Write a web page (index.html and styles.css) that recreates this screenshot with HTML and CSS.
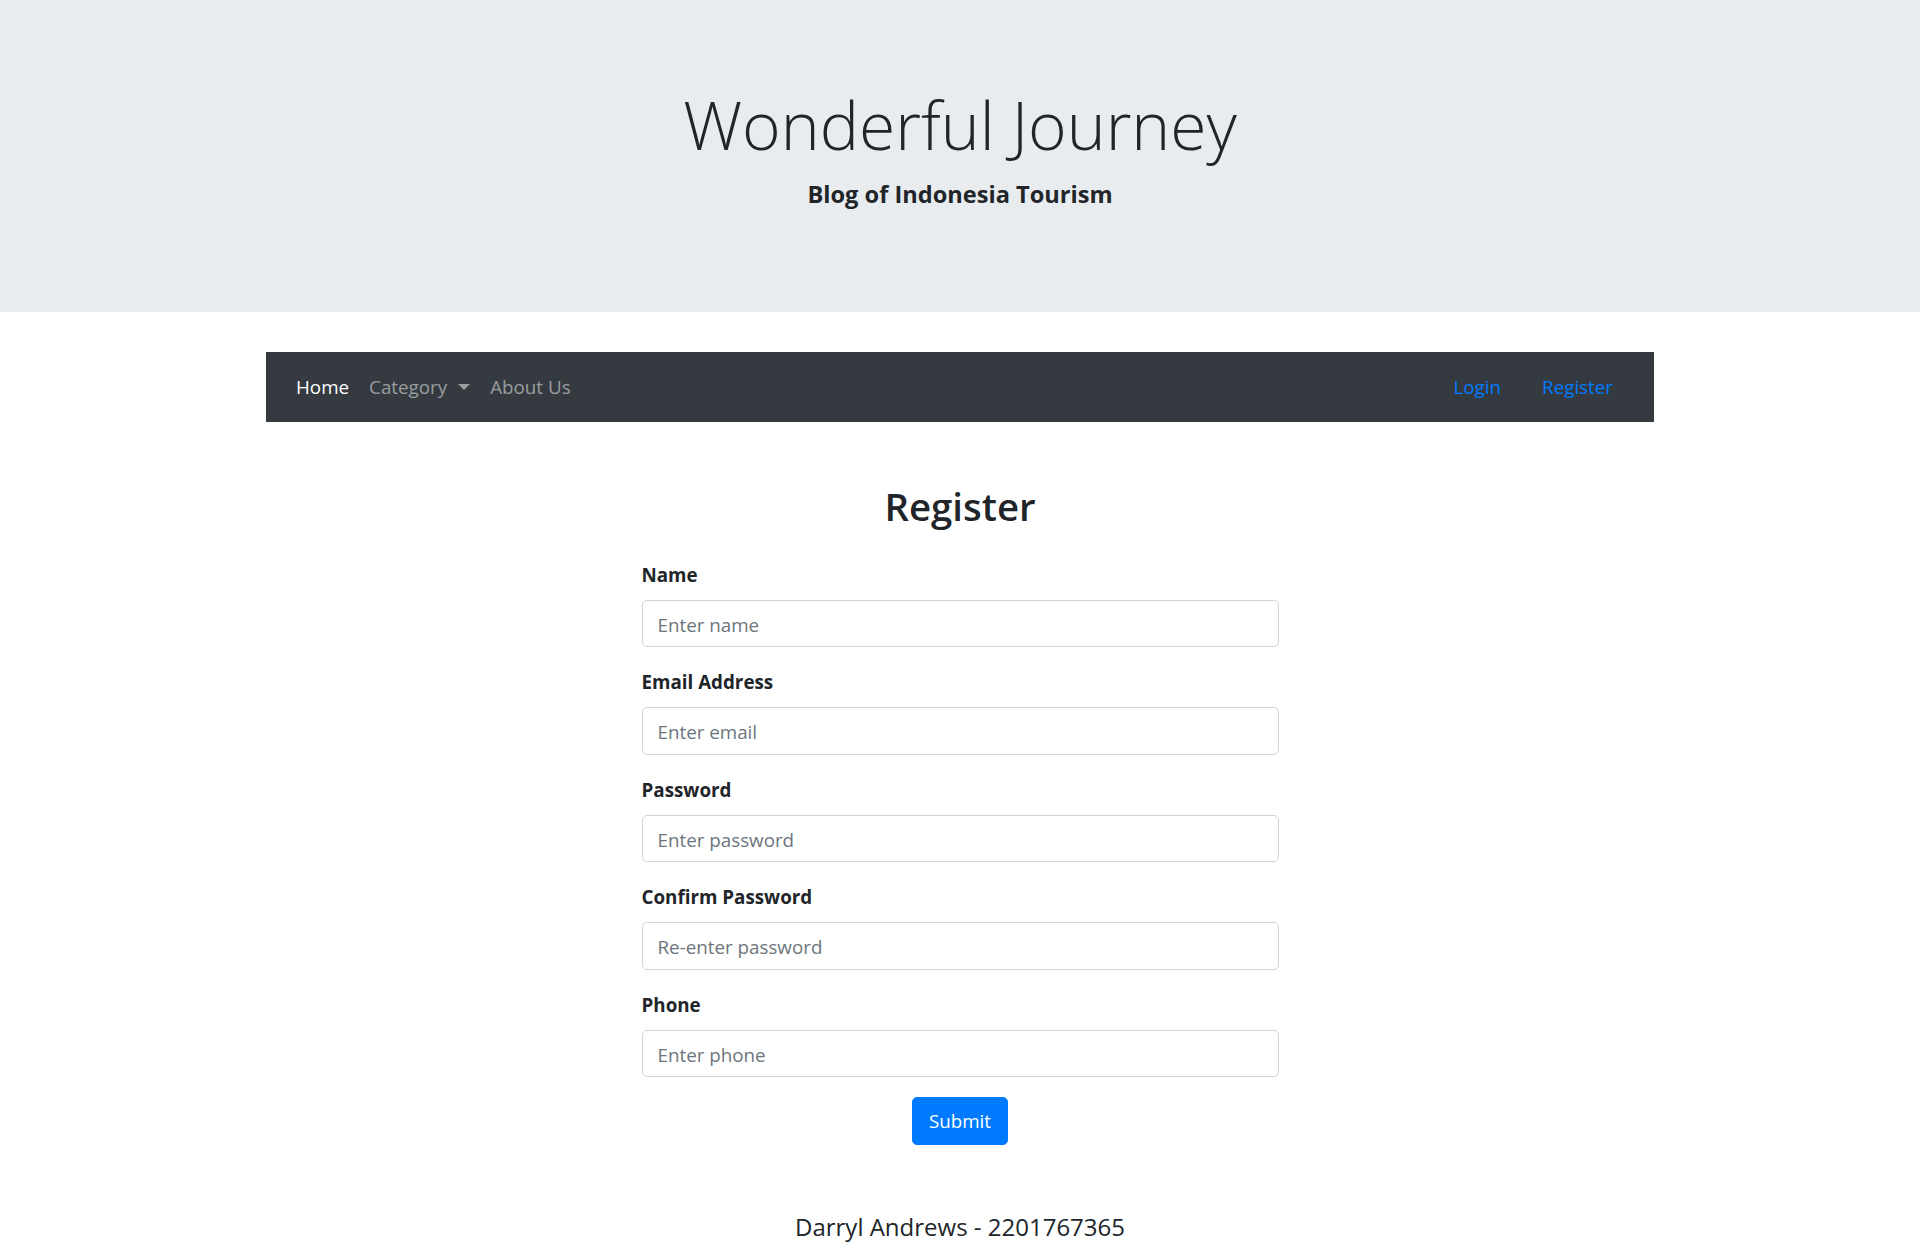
FILE: index.html
```html
<!DOCTYPE html>
<html lang="en">
<head>
<meta charset="utf-8">
<title>Wonderful Journey - Register</title>
<link rel="stylesheet" href="styles.css">
</head>
<body>
<header class="jumbotron">
  <h1 class="display-title">Wonderful Journey</h1>
  <p class="lead"><strong>Blog of Indonesia Tourism</strong></p>
</header>

<div class="container">
  <nav class="navbar">
    <ul class="nav nav-left">
      <li><a class="nav-link active" href="#">Home</a></li>
      <li><a class="nav-link" href="#">Category<span class="caret"></span></a></li>
      <li><a class="nav-link" href="#">About Us</a></li>
    </ul>
    <ul class="nav nav-right">
      <li><a class="nav-link link-blue" href="#">Login</a></li>
      <li><a class="nav-link link-blue" href="#">Register</a></li>
    </ul>
  </nav>

  <main class="main">
    <h2 class="page-title">Register</h2>
    <form class="register-form">
      <div class="form-group">
        <label for="name">Name</label>
        <input class="form-control" id="name" type="text" placeholder="Enter name">
      </div>
      <div class="form-group">
        <label for="email">Email Address</label>
        <input class="form-control" id="email" type="email" placeholder="Enter email">
      </div>
      <div class="form-group">
        <label for="password">Password</label>
        <input class="form-control" id="password" type="password" placeholder="Enter password">
      </div>
      <div class="form-group">
        <label for="confirm">Confirm Password</label>
        <input class="form-control" id="confirm" type="password" placeholder="Re-enter password">
      </div>
      <div class="form-group">
        <label for="phone">Phone</label>
        <input class="form-control" id="phone" type="text" placeholder="Enter phone">
      </div>
      <div class="form-actions">
        <button class="btn-primary" type="submit">Submit</button>
      </div>
    </form>
  </main>

  <footer class="footer">Darryl Andrews - 2201767365</footer>
</div>
</body>
</html>
```
FILE: styles.css
```css
* { box-sizing: border-box; }

html, body {
  margin: 0;
  padding: 0;
}

body {
  font-family: "Open Sans", "Noto Sans", sans-serif;
  color: #212529;
  background: #ffffff;
}

.jumbotron {
  background: #e9ecef;
  padding: 82px 0 80px;
  margin-bottom: 40px;
  text-align: center;
}

.display-title {
  font-size: 66px;
  font-weight: 300;
  line-height: 84px;
  margin: 0 0 10px;
  color: #212529;
}

.lead {
  font-size: 23.6px;
  line-height: 37.5px;
  margin: 0 0 18px;
}

.lead strong {
  font-weight: 700;
}

.container {
  width: 1388px;
  margin: 0 auto;
}

.navbar {
  background: #343a40;
  height: 70px;
  padding: 0 20px;
  display: flex;
  align-items: center;
  justify-content: space-between;
}

.nav {
  list-style: none;
  margin: 0;
  padding: 0;
  display: flex;
  align-items: center;
}

.nav-right {
  gap: 21px;
  margin-right: 11px;
}

.nav-link {
  display: block;
  padding: 0 10px;
  font-size: 18.8px;
  line-height: 30px;
  text-decoration: none;
  color: rgba(255, 255, 255, 0.5);
}

.nav-link.active {
  color: #ffffff;
}

.nav-link.link-blue {
  color: #007bff;
}

.caret {
  display: inline-block;
  width: 0;
  height: 0;
  margin-left: 11px;
  vertical-align: 4px;
  border-top: 6px solid rgba(255, 255, 255, 0.5);
  border-left: 6.5px solid transparent;
  border-right: 6.5px solid transparent;
}

.main {
  padding-top: 60px;
}

.page-title {
  text-align: center;
  font-size: 38.4px;
  font-weight: 600;
  line-height: 48px;
  margin: 0 0 30px;
}

.register-form {
  width: 637px;
  margin: 0 auto;
}

.form-group {
  margin-bottom: 20px;
}

.form-group label {
  display: block;
  font-size: 18.8px;
  font-weight: 700;
  line-height: 30px;
  margin-bottom: 10px;
}

.form-control {
  display: block;
  width: 100%;
  height: 47.5px;
  padding: 9px 15px 6px;
  font-family: inherit;
  font-size: 18.8px;
  line-height: 30px;
  color: #495057;
  background: #ffffff;
  border: 1.25px solid #ced4da;
  border-radius: 5px;
  outline: none;
}

.form-control::placeholder {
  color: #6c757d;
  opacity: 1;
}

.form-actions {
  display: flex;
  justify-content: center;
}

.btn-primary {
  font-family: inherit;
  font-size: 18.75px;
  line-height: 30px;
  padding: 8px 15px 7px;
  width: 96px;
  height: 47.5px;
  color: #ffffff;
  background: #007bff;
  border: 1.25px solid #007bff;
  border-radius: 5px;
  cursor: pointer;
}

.footer {
  margin-top: 67.5px;
  text-align: center;
  font-size: 24px;
  font-weight: 500;
  line-height: 30px;
  padding-bottom: 8px;
}
```
